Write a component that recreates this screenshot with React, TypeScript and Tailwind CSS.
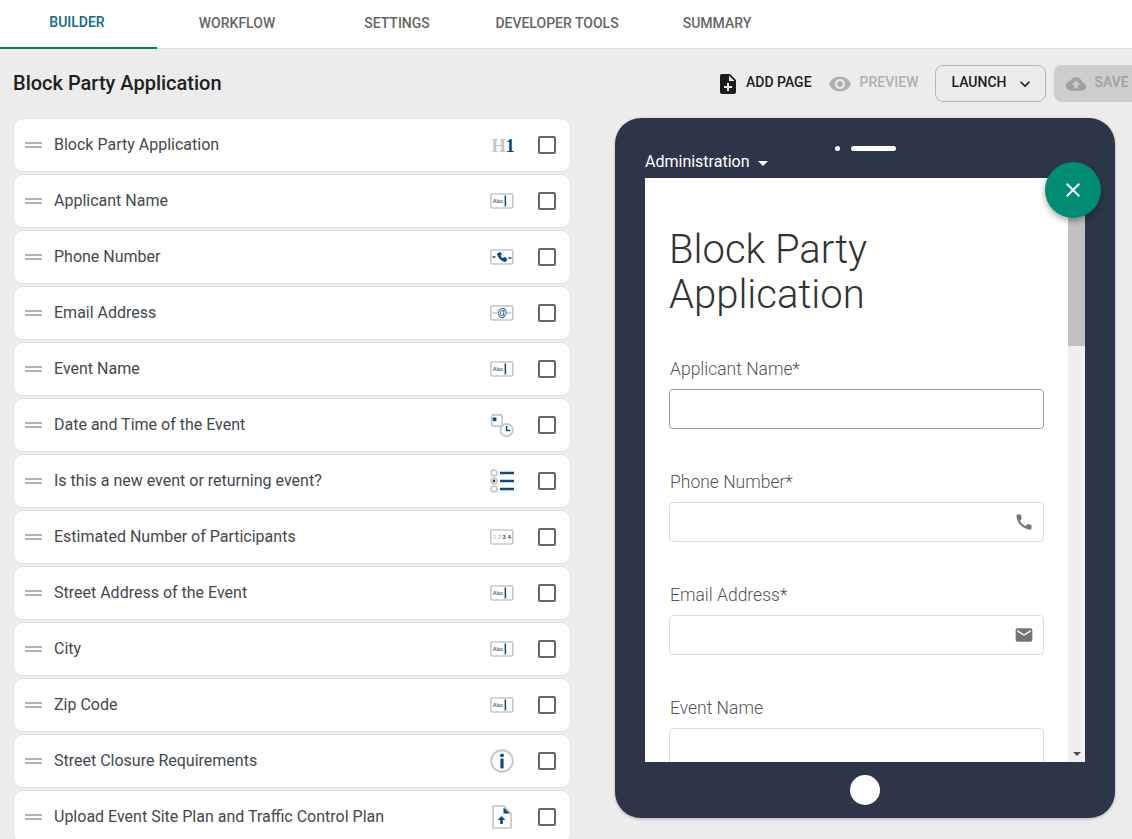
import type { ReactNode } from 'react';

const roboto = { fontFamily: 'Roboto, sans-serif' };

const Mi = ({ d, className }: { d: string; className?: string }) => (
  <svg viewBox="0 0 24 24" className={className} fill="currentColor">
    <path d={d} />
  </svg>
);

const paths = {
  noteAdd: 'M14 2H6c-1.1 0-1.99.9-1.99 2L4 20c0 1.1.89 2 1.99 2H18c1.1 0 2-.9 2-2V8l-6-6zm2 14h-3v3h-2v-3H8v-2h3v-3h2v3h3v2zm-3-7V3.5L18.5 9H13z',
  eye: 'M12 4.5C7 4.5 2.73 7.61 1 12c1.73 4.39 6 7.5 11 7.5s9.27-3.11 11-7.5c-1.73-4.39-6-7.5-11-7.5zM12 17c-2.76 0-5-2.24-5-5s2.24-5 5-5 5 2.24 5 5-2.24 5-5 5zm0-8c-1.66 0-3 1.34-3 3s1.34 3 3 3 3-1.34 3-3-1.34-3-3-3z',
  cloud: 'M19.35 10.04C18.67 6.59 15.64 4 12 4 9.11 4 6.6 5.64 5.35 8.04 2.34 8.36 0 10.91 0 14c0 3.31 2.69 6 6 6h13c2.76 0 5-2.24 5-5 0-2.64-2.05-4.78-4.65-4.96zM14 13v4h-4v-4H7l5-5 5 5h-3z',
  phone: 'M20.01 15.38c-1.23 0-2.42-.2-3.53-.56-.35-.12-.74-.03-1.01.24l-1.57 1.97c-2.83-1.35-5.48-3.9-6.89-6.83l1.95-1.66c.27-.28.35-.67.24-1.02-.37-1.11-.56-2.3-.56-3.53 0-.54-.45-.99-.99-.99H4.19C3.65 3 3 3.24 3 3.99 3 13.28 10.73 21 20.01 21c.71 0 .99-.63.99-1.18v-3.45c0-.54-.45-.99-.99-.99z',
  mail: 'M20 4H4c-1.1 0-1.99.9-1.99 2L2 18c0 1.1.9 2 2 2h16c1.1 0 2-.9 2-2V6c0-1.1-.9-2-2-2zm0 4l-8 5-8-5V6l8 5 8-5v2z',
  close: 'M19 6.41L17.59 5 12 10.59 6.41 5 5 6.41 10.59 12 5 17.59 6.41 19 12 13.41 17.59 19 19 17.59 13.41 12z',
  chevron: 'M16.59 8.59L12 13.17 7.41 8.59 6 10l6 6 6-6z',
};

const blue = '#0b4a7d';
const grey = '#c6c6c6';

const BoxIcon = ({ children }: { children: ReactNode }) => (
  <svg viewBox="0 0 24 24" className="h-6 w-6">
    <rect x="0.8" y="5" width="22" height="14" rx="1.6" fill="#fff" stroke={grey} strokeWidth="1.6" />
    {children}
  </svg>
);

const H1Icon = () => (
  <svg viewBox="0 0 24 24" className="h-6 w-6">
    <text x="1.5" y="19" fontSize="18.5" fontWeight="700" fontFamily="Liberation Serif, serif" fill={grey}>H</text>
    <text x="15.5" y="19" fontSize="18.5" fontWeight="700" fontFamily="Liberation Serif, serif" fill={blue}>1</text>
  </svg>
);

const AbcIcon = () => (
  <BoxIcon>
    <text x="2.8" y="14" fontSize="5.4" fontWeight="700" fontFamily="Liberation Sans, sans-serif" fill="#5a6672">Abc</text>
    <rect x="14.6" y="6.5" width="1.5" height="11" fill={blue} />
  </BoxIcon>
);

const PhoneIcon = () => (
  <BoxIcon>
    <path d="M2.5 12h3M18.5 13h3" stroke={blue} strokeWidth="1.3" />
    <path d="M7 8.5l3.2-1.8 1.6 2.8-1.3 1.2c.6 1.1 1.4 1.9 2.5 2.4l1.5-1 2.9 2-1.6 3c-4.5-.6-8-4.3-8.8-8.6z" fill={blue} />
  </BoxIcon>
);

const AtIcon = () => (
  <BoxIcon>
    <path d="M2.5 12h5M16 12h5.5" stroke={grey} strokeWidth="1.3" />
    <text x="7.2" y="15.4" fontSize="10" fontWeight="700" fontFamily="Liberation Sans, sans-serif" fill={blue}>@</text>
  </BoxIcon>
);

const DateIcon = () => (
  <svg viewBox="0 0 24 24" className="h-6 w-6">
    <rect x="1.8" y="1.8" width="10.4" height="11.4" rx="1.5" fill="#fff" stroke={grey} strokeWidth="1.7" />
    <path d="M4 0.5v2M10 0.5v2" stroke={grey} strokeWidth="1.4" />
    <rect x="2.8" y="4.5" width="3.6" height="3.6" fill={blue} />
    <circle cx="16.6" cy="17" r="6.2" fill="#fff" stroke={grey} strokeWidth="1.7" />
    <path d="M16.6 13v4.6h3.6" fill="none" stroke={blue} strokeWidth="1.5" />
  </svg>
);

const RadioIcon = () => (
  <svg viewBox="0 0 24 24" className="h-6 w-6">
    <circle cx="4" cy="4" r="3" fill="#fff" stroke={grey} strokeWidth="1.7" />
    <circle cx="4" cy="12" r="3" fill="#fff" stroke={grey} strokeWidth="1.7" />
    <circle cx="4" cy="12" r="1.4" fill={blue} />
    <circle cx="4" cy="20" r="3" fill="#fff" stroke={grey} strokeWidth="1.7" />
    <path d="M10 4h14M10 12h14M10 20h14" stroke={blue} strokeWidth="2.3" />
  </svg>
);

const NumberIcon = () => (
  <BoxIcon>
    <text x="3" y="14" fontSize="6" fontWeight="700" fontFamily="Liberation Sans, sans-serif" fill="#c4c4c4">1 2</text>
    <text x="12.5" y="14" fontSize="6" fontWeight="700" fontFamily="Liberation Sans, sans-serif" fill="#2e4a66">3 4</text>
  </BoxIcon>
);

const InfoIcon = () => (
  <svg viewBox="0 0 24 24" className="h-6 w-6">
    <circle cx="12" cy="12" r="10.8" fill="#fff" stroke={grey} strokeWidth="1.9" />
    <circle cx="12" cy="6.3" r="1.9" fill={blue} />
    <rect x="10.4" y="9.5" width="3.2" height="10" rx="1" fill={blue} />
  </svg>
);

const UploadIcon = () => (
  <svg viewBox="0 0 24 24" className="h-6 w-6">
    <path d="M3 1h11l7 7.5V23H3z" fill="#fff" stroke={grey} strokeWidth="1.7" />
    <path d="M13.5 2.5v6h6.5z" fill={blue} />
    <path d="M11.5 11l3.8 4h-2.5v4h-2.6v-4H7.7z" fill={blue} />
  </svg>
);

const rows: [string, ReactNode][] = [
  ['Block Party Application', <H1Icon />],
  ['Applicant Name', <AbcIcon />],
  ['Phone Number', <PhoneIcon />],
  ['Email Address', <AtIcon />],
  ['Event Name', <AbcIcon />],
  ['Date and Time of the Event', <DateIcon />],
  ['Is this a new event or returning event?', <RadioIcon />],
  ['Estimated Number of Participants', <NumberIcon />],
  ['Street Address of the Event', <AbcIcon />],
  ['City', <AbcIcon />],
  ['Zip Code', <AbcIcon />],
  ['Street Closure Requirements', <InfoIcon />],
  ['Upload Event Site Plan and Traffic Control Plan', <UploadIcon />],
];

const tabs = ['BUILDER', 'WORKFLOW', 'SETTINGS', 'DEVELOPER TOOLS', 'SUMMARY'];

const Row = ({ label, icon }: { label: string; icon: ReactNode }) => (
  <div className="flex h-[54px] shrink-0 items-center rounded-[10px] border border-[#e2e2e2] bg-white pl-[11px] pr-[14px]">
    <div className="flex w-[17px] flex-col gap-[2px]">
      <div className="h-[2px] bg-[#b4b4b4]" />
      <div className="h-[2px] bg-[#b4b4b4]" />
    </div>
    <span className="ml-3 flex-1 text-base text-[#44484d]">{label}</span>
    <div className="flex w-6 items-center justify-center">{icon}</div>
    <div className="ml-6 h-[18px] w-[18px] rounded-[2px] border-2 border-[#666666]" />
  </div>
);

const Field = ({ label, icon, dark }: { label: string; icon?: string; dark?: boolean }) => (
  <div className="mb-[41px] flex flex-col">
    <label className="mb-[8px] pl-px text-[17.5px] leading-[24px] font-light text-[#555555]">{label}</label>
    <div className={`flex h-10 w-[375px] shrink-0 items-center justify-end rounded-[4px] border bg-white pr-[9px] ${dark ? 'border-[#9a9a9a]' : 'border-[#dcdcdc]'}`}>
      {icon && <Mi d={icon} className="h-5 w-5 text-[#757575]" />}
    </div>
  </div>
);

export default function App() {
  return (
    <div className="flex h-[839px] w-[1132px] flex-col overflow-hidden bg-[#ececec]" style={roboto}>
      <nav className="flex h-[49px] shrink-0 border-b border-[#dfdfdf] bg-white">
        {tabs.map((t, i) => (
          <div
            key={t}
            className={`flex h-[49px] items-center justify-center pb-1 text-sm font-medium ${
              i === 0 ? 'w-[157px] border-b-2 border-[#00806c] pr-[3px] text-[#0f6b87]' : 'w-[160px] text-[#666666]'
            }`}
          >
            {t}
          </div>
        ))}
      </nav>

      <div className="flex h-[69px] shrink-0 items-center pl-[13px]">
        <h1 className="mb-[2px] whitespace-nowrap text-xl font-medium text-[#212121]">Block Party Application</h1>
        <div className="ml-auto flex w-[416px] shrink-0 items-center whitespace-nowrap text-sm font-medium">
          <Mi d={paths.noteAdd} className="h-6 w-6 shrink-0 text-[#1c1c1c]" />
          <span className="mb-[3px] ml-[6px] text-[#1c1c1c]">ADD PAGE</span>
          <Mi d={paths.eye} className="ml-[16px] h-6 w-6 shrink-0 text-[#b0b0b0]" />
          <span className="mb-[3px] ml-[8px] text-[#b0b0b0]">PREVIEW</span>
          <button className="ml-[17px] flex h-[37px] w-[111px] shrink-0 items-center rounded-[8px] border border-[#b5b5b5] pl-[15px] text-[#1c1c1c]">
            <span className="mb-[3px]">LAUNCH</span>
            <Mi d={paths.chevron} className="ml-[8px] h-5 w-5 shrink-0" />
          </button>
          <button className="ml-2 flex h-[37px] w-[90px] shrink-0 items-center rounded-[8px] bg-[#cdcdcd] pl-[12px] text-[#a0a0a0]">
            <Mi d={paths.cloud} className="h-5 w-5 shrink-0" />
            <span className="mb-[3px] ml-[8px]">SAVE</span>
          </button>
        </div>
      </div>

      <div className="flex min-h-0 flex-1 pl-[13px]">
        <div className="flex w-[558px] shrink-0 flex-col gap-[2px]">
          {rows.map(([label, icon]) => (
            <Row key={label} label={label} icon={icon} />
          ))}
        </div>

        <div className="relative ml-[44px] flex h-[700px] w-[500px] shrink-0 flex-col rounded-[26px] bg-[#2d3648] px-[30px] shadow-[0_1px_3px_rgba(0,0,0,0.25)]">
          <div className="relative h-[60px] shrink-0">
            <div className="absolute left-[190px] top-[28px] h-[5px] w-[5px] rounded-full bg-white" />
            <div className="absolute left-[206px] top-[28px] h-[5px] w-[45px] rounded-full bg-white" />
            <div className="absolute bottom-[4px] left-0 flex items-center text-base text-white">
              Administration
              <span className="ml-2 mt-[2px] h-0 w-0 border-x-[5px] border-t-[5px] border-x-transparent border-t-white" />
            </div>
          </div>

          <div className="flex h-[584px] shrink-0 overflow-hidden bg-white">
            <div className="flex-1 overflow-hidden pl-6 pt-[49px]">
              <h2 className="mb-[40px] w-[300px] text-[40px] leading-[45px] font-light text-[#333333]">Block Party Application</h2>
              <Field label="Applicant Name*" dark />
              <Field label="Phone Number*" icon={paths.phone} />
              <Field label="Email Address*" icon={paths.mail} />
              <Field label="Event Name" />
            </div>
            <div className="relative w-[17px] shrink-0 bg-[#efefef]">
              <div className="mt-[17px] h-[151px] bg-[#c1c1c1]" />
              <div className="absolute bottom-[6px] left-[5px] h-0 w-0 border-x-[4px] border-t-[4px] border-x-transparent border-t-[#505050]" />
            </div>
          </div>

          <div className="flex flex-1 items-center justify-center">
            <div className="h-[30px] w-[30px] rounded-full bg-white" />
          </div>

          <div className="absolute left-[430px] top-[44px] flex h-14 w-14 items-center justify-center rounded-full bg-[#008b74] text-white shadow-[0_3px_6px_rgba(0,0,0,0.35)]">
            <Mi d={paths.close} className="h-6 w-6" />
          </div>
        </div>
      </div>
    </div>
  );
}
